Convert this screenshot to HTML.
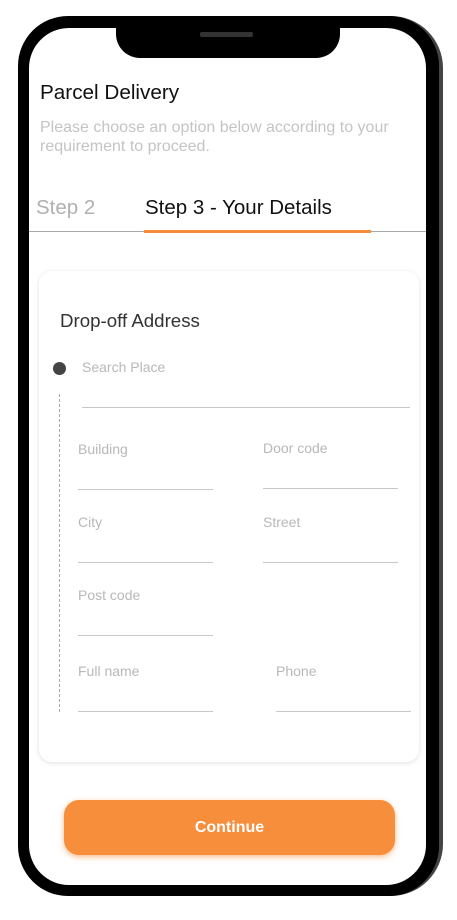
<!DOCTYPE html>
<html><head><style>
*{margin:0;padding:0;box-sizing:border-box}
body{width:457px;height:920px;background:#fff;position:relative;overflow:hidden;font-family:"Liberation Sans",Arial,sans-serif}
.edge{position:absolute;left:22px;top:16px;width:421px;height:880px;border-radius:52px;background:#444}
.frame{position:absolute;left:18px;top:16px;width:421px;height:880px;border-radius:50px;background:#000}
.screen{position:absolute;left:29px;top:28px;width:397px;height:857px;border-radius:40px;background:#fff;overflow:hidden}
.notch{position:absolute;left:116px;top:20px;width:224px;height:38px;background:#000;border-radius:0 0 24px 24px}
.spk{position:absolute;left:200px;top:32px;width:53px;height:5px;background:#333;border-radius:2px}
.t{position:absolute;white-space:nowrap}
.line{position:absolute;height:1px;background:#c8c8c8}
.lab{position:absolute;font-size:14px;color:#b8b8b8}
</style></head><body>
<div class="edge"></div>
<div class="frame"></div>
<div class="screen"></div>
<div class="notch"></div>
<div class="spk"></div>
<div class="t" style="left:40px;top:81px;font-size:20.7px;color:#111">Parcel Delivery</div>
<div class="t" style="left:40px;top:118px;font-size:16px;line-height:19px;color:#c4c4c4">Please choose an option below according to your<br>requirement to proceed.</div>
<div class="t" style="left:36px;top:196px;font-size:20.5px;color:#b0b0b0">Step 2</div>
<div class="t" style="left:145px;top:196px;font-size:20.5px;color:#111">Step 3 - Your Details</div>
<div style="position:absolute;left:29px;top:231px;width:397px;height:1px;background:#aaa"></div>
<div style="position:absolute;left:144px;top:230px;width:227px;height:3px;background:#f38d3c"></div>
<div style="position:absolute;left:39px;top:271px;width:380px;height:491px;border-radius:13px;background:#fff;box-shadow:0 1px 5px rgba(0,0,0,.13)"></div>
<div class="t" style="left:60px;top:310px;font-size:18.7px;color:#333">Drop-off Address</div>
<div style="position:absolute;left:53px;top:362px;width:13px;height:13px;border-radius:50%;background:#444"></div>
<div style="position:absolute;left:59px;top:394px;height:318px;border-left:1px dashed #aaa"></div>
<div class="lab" style="left:82px;top:359px">Search Place</div>
<div class="line" style="left:82px;top:407px;width:328px"></div>
<div class="lab" style="left:78px;top:441px">Building</div>
<div class="line" style="left:78px;top:489px;width:135px"></div>
<div class="lab" style="left:263px;top:440px">Door code</div>
<div class="line" style="left:263px;top:488px;width:135px"></div>
<div class="lab" style="left:78px;top:514px">City</div>
<div class="line" style="left:78px;top:562px;width:135px"></div>
<div class="lab" style="left:263px;top:514px">Street</div>
<div class="line" style="left:263px;top:562px;width:135px"></div>
<div class="lab" style="left:78px;top:587px">Post code</div>
<div class="line" style="left:78px;top:635px;width:135px"></div>
<div class="lab" style="left:78px;top:663px">Full name</div>
<div class="line" style="left:78px;top:711px;width:135px"></div>
<div class="lab" style="left:276px;top:663px">Phone</div>
<div class="line" style="left:276px;top:711px;width:135px"></div>
<div style="position:absolute;left:64px;top:800px;width:331px;height:55px;border-radius:15px;background:#f68e3c;box-shadow:0 2px 6px rgba(246,142,60,.6);color:#fff;font-weight:bold;font-size:16px;text-align:center;line-height:55px">Continue</div>
</body></html>
